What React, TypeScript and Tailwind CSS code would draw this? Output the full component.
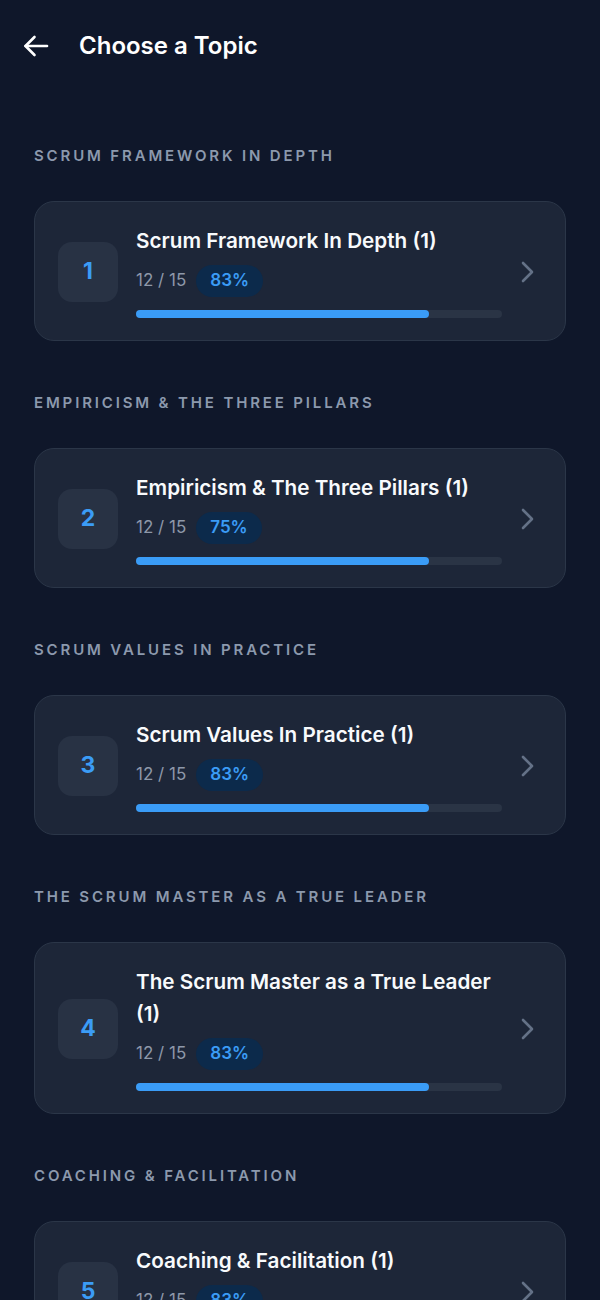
import React from "react";

type Topic = { section: string; title: string; done: number; total: number; pct: string };

const topics: Topic[] = [
  { section: "Scrum Framework In Depth", title: "Scrum Framework In Depth (1)", done: 12, total: 15, pct: "83%" },
  { section: "Empiricism & The Three Pillars", title: "Empiricism & The Three Pillars (1)", done: 12, total: 15, pct: "75%" },
  { section: "Scrum Values In Practice", title: "Scrum Values In Practice (1)", done: 12, total: 15, pct: "83%" },
  { section: "The Scrum Master as a True Leader", title: "The Scrum Master as a True Leader (1)", done: 12, total: 15, pct: "83%" },
  { section: "Coaching & Facilitation", title: "Coaching & Facilitation (1)", done: 12, total: 15, pct: "83%" },
];

function BackArrow() {
  return (
    <svg width="26" height="22" viewBox="0 0 26 22" fill="none" stroke="white" strokeWidth="2.6" strokeLinecap="round" strokeLinejoin="round">
      <path d="M24 11H2.5" />
      <path d="M11.5 2L2.5 11L11.5 20" />
    </svg>
  );
}

function Chevron() {
  return (
    <svg width="13" height="22" viewBox="0 0 13 22" fill="none" stroke="#647187" strokeWidth="2.6" strokeLinecap="round" strokeLinejoin="round">
      <path d="M2 2L11 11L2 20" />
    </svg>
  );
}

function TopicCard({ t, i }: { t: Topic; i: number }) {
  const width = (t.done / t.total) * 100;
  return (
    <div className="flex items-center rounded-[20px] border border-[#2b3648] bg-[#1d2638] pl-[23px] pr-[31px] pt-[23px] pb-[22px]">
      <div className="flex h-[60px] w-[60px] shrink-0 items-center justify-center rounded-[14px] bg-[#283244]">
        <span className="text-[23px] font-bold text-[#3b9cf6]">{i + 1}</span>
      </div>
      <div className="ml-[18px] flex min-w-0 flex-1 flex-col">
        <div className="text-[20.7px] font-semibold leading-8 text-[#f8fafc]">{t.title}</div>
        <div className="mt-2 flex items-center gap-[10px]">
          <span className="text-[17px] text-[#8e98a9]">
            {t.done} / {t.total}
          </span>
          <span className="flex h-8 items-center rounded-full bg-[#0c2a4b] px-[14px] text-[17px] font-semibold text-[#3b9cf6]">
            {t.pct}
          </span>
        </div>
        <div className="mt-[13px] h-2 w-full rounded-full bg-[#2a3445]">
          <div className="h-2 rounded-full bg-[#3a9cf7]" style={{ width: `${width}%` }} />
        </div>
      </div>
      <div className="ml-[19px] flex shrink-0 items-center">
        <Chevron />
      </div>
    </div>
  );
}

export default function App() {
  return (
    <div className="min-h-screen bg-[#0f172a] pb-10 font-['Inter','Noto_Sans',sans-serif] antialiased">
      <header className="flex h-[92px] items-center pl-[23px]">
        <BackArrow />
        <h1 className="ml-[30px] text-[24px] font-semibold text-white">Choose a Topic</h1>
      </header>
      <main className="flex flex-col px-[34px] pt-[54px]">
        {topics.map((t, i) => (
          <section key={i} className={i === 0 ? "" : "mt-[52px]"}>
            <div className="text-[15px] font-semibold uppercase leading-5 tracking-[2.85px] text-[#8c99ad]">
              {t.section}
            </div>
            <div className="mt-[35px]">
              <TopicCard t={t} i={i} />
            </div>
          </section>
        ))}
      </main>
    </div>
  );
}
